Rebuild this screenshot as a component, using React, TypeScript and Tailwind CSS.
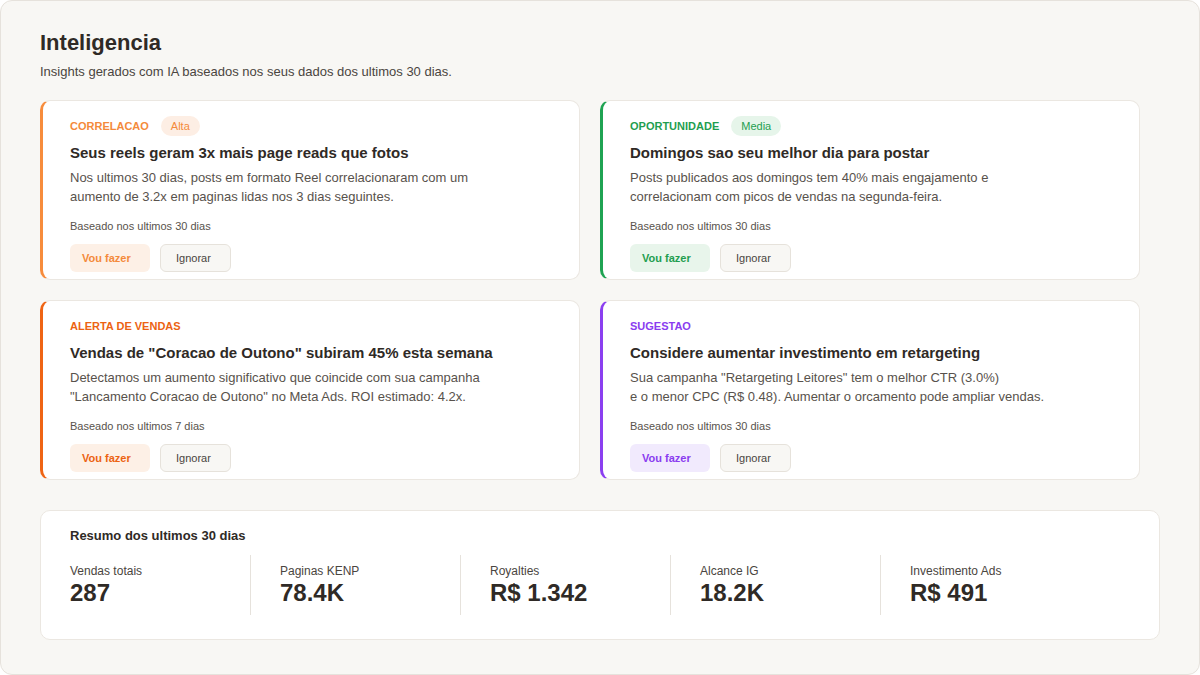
import React from "react";

type Insight = {
  tag: string;
  level?: string;
  title: string;
  body: string[];
  basis: string;
  accent: string;
  tagText: string;
  badge: string;
  action: string;
};

const insights: Insight[] = [
  {
    tag: "CORRELACAO",
    level: "Alta",
    title: "Seus reels geram 3x mais page reads que fotos",
    body: [
      "Nos ultimos 30 dias, posts em formato Reel correlacionaram com um",
      "aumento de 3.2x em paginas lidas nos 3 dias seguintes.",
    ],
    basis: "Baseado nos ultimos 30 dias",
    accent: "border-l-[#f78c3c]",
    tagText: "text-[#f48a3b]",
    badge: "bg-[#fdeee4] text-[#f48a3b]",
    action: "bg-[#fdf0e6] text-[#f48a3b]",
  },
  {
    tag: "OPORTUNIDADE",
    level: "Media",
    title: "Domingos sao seu melhor dia para postar",
    body: [
      "Posts publicados aos domingos tem 40% mais engajamento e",
      "correlacionam com picos de vendas na segunda-feira.",
    ],
    basis: "Baseado nos ultimos 30 dias",
    accent: "border-l-[#1fa352]",
    tagText: "text-[#1f9e50]",
    badge: "bg-[#e6f5ea] text-[#1f9e50]",
    action: "bg-[#e8f5eb] text-[#1f9e50]",
  },
  {
    tag: "ALERTA DE VENDAS",
    title: 'Vendas de "Coracao de Outono" subiram 45% esta semana',
    body: [
      "Detectamos um aumento significativo que coincide com sua campanha",
      '"Lancamento Coracao de Outono" no Meta Ads. ROI estimado: 4.2x.',
    ],
    basis: "Baseado nos ultimos 7 dias",
    accent: "border-l-[#ef6414]",
    tagText: "text-[#ec6312]",
    badge: "",
    action: "bg-[#fdf0e6] text-[#ec6312]",
  },
  {
    tag: "SUGESTAO",
    title: "Considere aumentar investimento em retargeting",
    body: [
      'Sua campanha "Retargeting Leitores" tem o melhor CTR (3.0%)',
      "e o menor CPC (R$ 0.48). Aumentar o orcamento pode ampliar vendas.",
    ],
    basis: "Baseado nos ultimos 30 dias",
    accent: "border-l-[#8b3ff0]",
    tagText: "text-[#8a3cf0]",
    badge: "",
    action: "bg-[#f1eafd] text-[#8a3cf0]",
  },
];

const stats = [
  { label: "Vendas totais", value: "287" },
  { label: "Paginas KENP", value: "78.4K" },
  { label: "Royalties", value: "R$ 1.342" },
  { label: "Alcance IG", value: "18.2K" },
  { label: "Investimento Ads", value: "R$ 491" },
];

function InsightCard({ it }: { it: Insight }) {
  return (
    <div
      className={`h-[180px] rounded-[10px] border border-[#ebe7e1] border-l-[3px] ${it.accent} bg-white pl-[27px] pr-6 pt-[16px]`}
    >
      <div className="flex items-center gap-3 h-[18px]">
        <span className={`text-[11px] font-bold ${it.tagText}`}>{it.tag}</span>
        {it.level && (
          <span className={`rounded-full px-[10px] h-[20px] leading-[20px] text-[11px] ${it.badge}`}>
            {it.level}
          </span>
        )}
      </div>
      <div className="mt-[8px] text-[15px] font-bold leading-[20px] text-[#2f2a26]">{it.title}</div>
      <div className="mt-[5px] text-[13px] leading-[19px] text-[#58524c]">
        {it.body.map((l) => (
          <div key={l}>{l}</div>
        ))}
      </div>
      <div className="mt-[13px] text-[11px] leading-[14px] text-[#58524c]">{it.basis}</div>
      <div className="mt-[11px] flex gap-[10px]">
        <button className={`h-[28px] w-[80px] rounded-md pl-3 text-left text-[11px] font-bold ${it.action}`}>
          Vou fazer
        </button>
        <button className="h-[28px] w-[71px] rounded-md border border-[#e6e2db] bg-[#f8f7f4] pl-[15px] text-left text-[11px] text-[#4a4540]">
          Ignorar
        </button>
      </div>
    </div>
  );
}

export default function App() {
  return (
    <div
      className="w-[1200px] h-[675px] overflow-hidden rounded-xl border border-[#e6e2dc] bg-[#f8f7f4] px-[39px] pt-[29px]"
      style={{ fontFamily: '"Liberation Sans", Arial, sans-serif' }}
    >
      <h1 className="text-[22px] font-bold leading-[26px] text-[#2f2a26]">Inteligencia</h1>
      <p className="mt-[8px] text-[13px] leading-[16px] text-[#4a4540]">
        Insights gerados com IA baseados nos seus dados dos ultimos 30 dias.
      </p>

      <div className="mt-[20px] grid w-[1100px] grid-cols-2 gap-5">
        {insights.map((it) => (
          <InsightCard key={it.tag} it={it} />
        ))}
      </div>

      <div className="mt-[30px] h-[130px] rounded-[10px] border border-[#ebe7e1] bg-white px-[29px] pt-[17px]">
        <div className="text-[13px] font-bold leading-[16px] text-[#2f2a26]">Resumo dos ultimos 30 dias</div>
        <div className="mt-[11px] flex">
          {stats.map((s, i) => (
            <div
              key={s.label}
              className={
                i === 0
                  ? "w-[180px] py-[9px]"
                  : "w-[210px] border-l border-[#e6e2dc] pl-[29px] py-[9px]"
              }
            >
              <div className="text-[12px] leading-[15px] text-[#4a4540]">{s.label}</div>
              <div className="mt-[1px] text-[24px] font-bold leading-[26px] text-[#2f2a26]">{s.value}</div>
            </div>
          ))}
        </div>
      </div>
    </div>
  );
}
